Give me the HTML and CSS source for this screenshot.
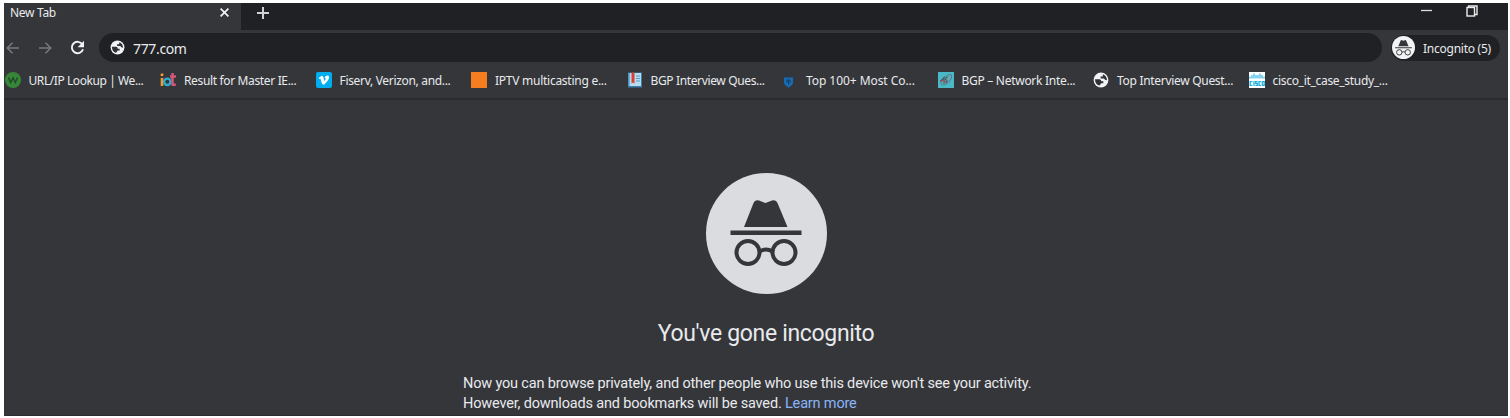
FILE: index.html
```html
<!DOCTYPE html>
<html lang="en">
<head>
<meta charset="utf-8">
<title>New Tab</title>
<link rel="stylesheet" href="styles.css">
</head>
<body>
<svg class="defs" width="0" height="0">
  <symbol id="globe" viewBox="0 0 16 16">
    <circle cx="8" cy="8" r="7.4" fill="#f1f3f4"/>
    <path d="M2 7.300H6.500Q8.300 7.600 8.300 9.300H10.300V11.200H8Q7.500 13 6.200 13.600 2.200 12.500 2 7.300ZM9.800 2.300Q13.800 3.700 14 8.300L12 7.800 11 6.400H7.600V4.500H9.800Z" fill="#303134"/>
  </symbol>
  <symbol id="spy" viewBox="0 0 72 68">
    <path d="M14 27 23.500 3Q25-.8 29 .6L35.500 3 42 .6Q46-.8 47.500 3L57.500 27ZM.5 30.500h71v4.500H.5Z"/>
    <g fill="none" stroke="currentColor" stroke-width="4"><circle cx="18" cy="52.500" r="11.500"/><circle cx="54" cy="52.500" r="11.500"/><path d="M29.500 51.500q6.500-4 13 0"/></g>
  </symbol>
</svg>
<div class="window">
  <header class="tabstrip">
    <div class="tab"><span class="tab-title">New Tab</span>
      <svg class="close" width="9" height="9" viewBox="0 0 8 8"><path d="M.5.5l7 7M7.500.5l-7 7" stroke="#f1f3f4" stroke-width="1.500"/></svg>
    </div>
    <svg class="plus" width="12" height="12" viewBox="0 0 12 12"><path d="M6 0v12M0 6h12" stroke="#d0d1d3" stroke-width="2"/></svg>
    <svg class="min" width="11" height="10" viewBox="0 0 11 10"><path d="M0 5.500h11" stroke="#dcdcdc" stroke-width="1.300"/></svg>
    <svg class="restore" width="12" height="12" viewBox="0 0 12 12" fill="none" stroke="#ececec" stroke-width="1.400"><rect x="1" y="2.500" width="7.500" height="8.500"/><path d="M2.500 2.300V1h8.500v8.500H9"/></svg>
  </header>
  <nav class="toolbar">
    <svg class="back" width="14" height="14" viewBox="0 0 14 14" fill="none" stroke="#77797c" stroke-width="1.500"><path d="M13 7H1.500M6.500 1.700 1.200 7l5.300 5.300"/></svg>
    <svg class="forward" width="14" height="14" viewBox="0 0 14 14" fill="none" stroke="#77797c" stroke-width="1.500"><path d="M1 7h11.500M7.500 1.700 12.800 7l-5.300 5.300"/></svg>
    <svg class="reload" width="15" height="15" viewBox="0 0 15 15"><path d="M12.400 4.500A5.700 5.700 0 1 0 13 9.200" fill="none" stroke="#f1f3f4" stroke-width="1.900"/><path d="M14 .8v6.400H7.700Z" fill="#f1f3f4"/></svg>
    <div class="omnibox"><svg width="15" height="15"><use href="#globe"/></svg><span class="url">777.com</span></div>
    <div class="profile"><span class="avatar"><svg width="17" height="16"><use href="#spy"/></svg></span><span class="profile-name">Incognito (5)</span></div>
  </nav>
  <nav class="bookmarks">
    <a class="bm b1"><svg width="16" height="16" viewBox="0 0 16 16"><circle cx="8" cy="8" r="8" fill="#388638"/><path d="M3.500 5.500 5.700 10.500 8 5.800l2.300 4.700 2.200-5" fill="none" stroke="#1f4a29" stroke-width="1.400"/></svg><span>URL/IP Lookup | We...</span></a>
    <a class="bm b2"><svg width="16" height="16" viewBox="0 0 16 16" fill="none"><path d="M2 6v8" stroke="#f39a35" stroke-width="2.600"/><circle cx="2" cy="2.700" r="1.500" fill="#f39a35"/><circle cx="7.300" cy="9.800" r="3.200" stroke="#2aaed0" stroke-width="2.400"/><path d="M12.500 1v12.500M10 4.500h6M12 12.800h3.800" stroke="#d2577b" stroke-width="2.600"/></svg><span>Result for Master IE...</span></a>
    <a class="bm b3"><svg width="16" height="16" viewBox="0 0 16 16"><rect width="16" height="16" rx="2" fill="#00adef"/><path d="M2.700 6 5.300 3.900Q7 3.300 7.500 5.500L8.300 9Q9.500 8 9.700 6.500 9.500 5.600 8.500 6 9.500 3.400 12 3.600 13.500 4 13 6.300 12 9.500 8 12.800 6.400 13 5.700 11L4.500 6.800 3.400 7Z" fill="#fff"/></svg><span>Fiserv, Verizon, and...</span></a>
    <a class="bm b4"><svg width="16" height="16" viewBox="0 0 16 16"><path d="M0 0h16v16H0Z" fill="#f57e20"/></svg><span>IPTV multicasting e...</span></a>
    <a class="bm b5"><svg width="16" height="16" viewBox="0 0 16 16"><path d="M1 .5h14v15H1Z" fill="#387eae"/><path d="M3 1h11v13H3Z" fill="#b7dcf0"/><path d="M1.500 1H3v13H1.500Z" fill="#68aedb"/><path d="M4.500.5H7.500v11L6 10.500 4.500 11.500Z" fill="#db3e2d"/><path d="M9 4h4M9 6.500h4M9 9h4" stroke="#5a99c2"/></svg><span>BGP Interview Ques...</span></a>
    <a class="bm b6"><svg width="16" height="16" viewBox="0 0 16 16"><path d="M2 5.500h9v5.500q-.5 2.500-4.500 4.700Q2.500 13.500 2 11Z" fill="#176db5"/><path d="M6.500 8v5M5 11V8h3v3" fill="none" stroke="#183f65"/><path d="M3 3q4.500-2 8 0M12.500 5q1.500 2 .8 4.500" fill="none" stroke="#24384b"/></svg><span>Top 100+ Most Co...</span></a>
    <a class="bm b7"><svg width="16" height="16" viewBox="0 0 16 16"><path d="M0 0h16v16H0Z" fill="#4bb8c8"/><path d="M3 12q-1-3 3-6.500Q12 1 13.500 3 15 6 10.500 10.500 5 14.500 3 12Z" fill="#65a9b5" stroke="#3f7382" stroke-width=".7"/><path d="M2.500 9.500 6 5.500v6M9.500 5q-3 2-1.500 3 2 .5 0 3" fill="none" stroke="#465a66" stroke-width="1.200"/><path d="M2 8.500h3M6 10h2" stroke="#b4434b" stroke-width="1.200"/></svg><span>BGP – Network Inte...</span></a>
    <a class="bm b8"><svg width="16" height="16"><use href="#globe"/></svg><span>Top Interview Quest...</span></a>
    <a class="bm b9"><svg width="16" height="16" viewBox="0 0 16 16" fill="none" stroke="#20b1df"><path d="M0 0h16v16H0Z" fill="#fff" stroke="none"/><path d="M1 4.500v2M3 3v3.500M5 1.500v5M7 3v3.500M9 3v3.500M11 1.500v5M13 3v3.500M15 4.500v2" stroke-width="1.100"/><path d="M3.500 9.700H1.200v3.600h2.300M5 9v5M8.500 9.700H6.700v1.600h1.700v2H6.400M12 9.700H10v3.600h2M13.300 9.700h1.900v3.600h-1.900Z" stroke-width="1.300"/></svg><span>cisco_it_case_study_...</span></a>
  </nav>
  <main class="page">
    <div class="hero"><svg width="72" height="68"><use href="#spy"/></svg></div>
    <h1><span>You've gone incognito</span></h1>
    <p><span class="l1">Now you can browse privately, and other people who use this device won't see your activity.</span><br><span class="l2">However, downloads and bookmarks will be saved. <a class="learn">Learn more</a></span></p>
  </main>
</div>
</body>
</html>
```
FILE: styles.css
```css
* { box-sizing: border-box; }
body { margin: 0; padding: 3px 2px 2px 4px; height: 418px; background: #fff; overflow: hidden; }
svg { display: block; flex: none; }
.defs { position: absolute; }
.window { height: 413px; background: #35363a; color: #e8eaed; font-family: "Noto Sans", sans-serif; font-size: 12px; overflow: hidden; border-bottom: 1px solid #2b2c2f; white-space: nowrap; }
.tabstrip { height: 27px; display: flex; background: #202124; }
.tab { width: 237px; padding: 0 12px 8px 6px; background: #35363a; display: flex; align-items: center; justify-content: space-between; }
.tab-title { letter-spacing: -.3px; }
.plus { margin: 4px auto 0 16px; }
.min { margin: 2px 34px 0 0; }
.restore { margin: 2px 30px 0 0; }
.toolbar { height: 34px; display: flex; align-items: center; padding: 1px 8px 0 2px; }
.forward { margin-left: 18px; }
.reload { margin-left: 18px; }
.omnibox { width: 1283px; height: 29px; margin-left: 14px; padding-left: 11px; border-radius: 15px; background: #202124; display: flex; align-items: center; gap: 8px; }
.url { font-size: 14px; letter-spacing: -.35px; padding-top: 1px; }
.profile { width: 109px; height: 26px; margin-left: 9px; border-radius: 13px; background: #202124; display: flex; align-items: center; gap: 8px; padding-left: 1px; }
.avatar { width: 23px; height: 23px; border-radius: 50%; background: #f1f3f4; display: grid; place-items: center; color: #35363a; fill: currentColor; }
.profile-name { letter-spacing: -.25px; padding-top: 1px; }
.bookmarks { height: 36px; display: flex; padding: 0 0 2px .5px; border-bottom: 2px solid #2a2b2e; }
.bm { width: 155.500px; display: flex; align-items: center; gap: 8px; flex: none; }
.bm span { letter-spacing: -.42px; }
.bm.b2 span { letter-spacing: -.35px; }
.bm.b3 span { letter-spacing: -.32px; }
.bm.b4 span { letter-spacing: -.26px; }
.bm.b5 span { letter-spacing: -.36px; }
.bm.b6 span { letter-spacing: -.06px; }
.bm.b7 span { letter-spacing: -.28px; }
.bm.b8 span, .bm.b9 span { letter-spacing: -.3px; }
.page { display: flex; flex-direction: column; align-items: center; padding: 73px 0 0 20px; font-family: Roboto, sans-serif; }
.hero { width: 121px; height: 121px; border-radius: 50%; background: #dadce0; display: flex; justify-content: center; padding-top: 27px; color: #35363a; fill: currentColor; }
h1 { margin: 25px 0 0; font-size: 23px; line-height: 30px; font-weight: 400; letter-spacing: -.33px; }
p { margin: 25px 0 0; width: 606px; font-size: 14.500px; line-height: 20px; letter-spacing: -.17px; }
.learn { color: #8ab4f8; }
```
